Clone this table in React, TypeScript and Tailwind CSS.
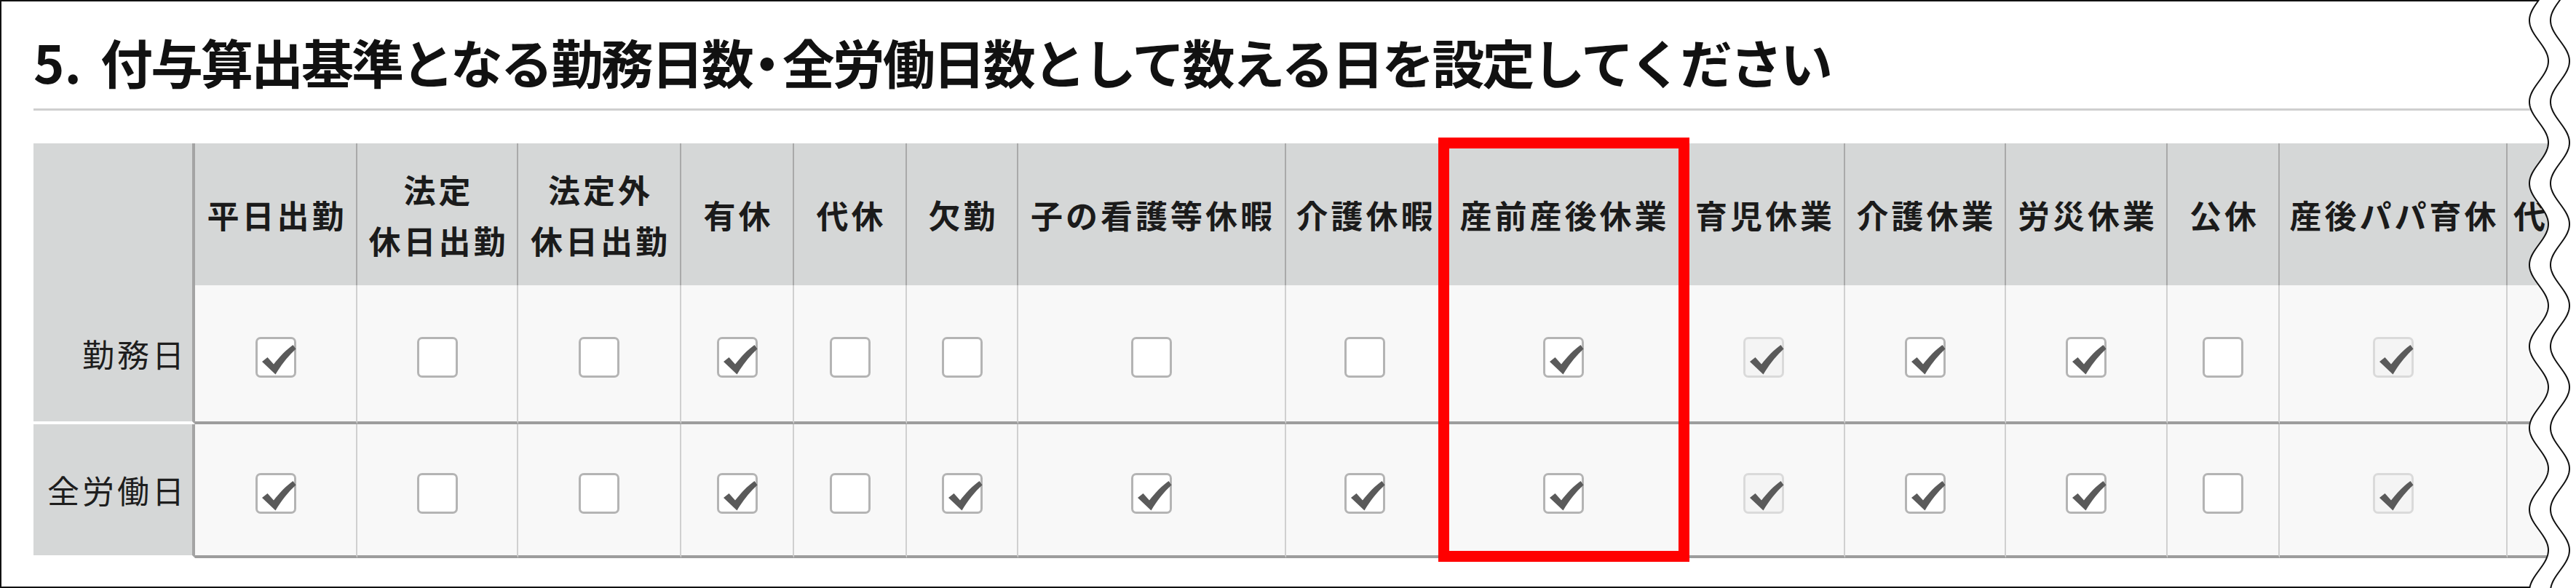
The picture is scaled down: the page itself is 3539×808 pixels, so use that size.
import React from "react";

type S = "on" | "off" | "dis" | "none";

const cols: { h: string[]; r1: S; r2: S }[] = [
  { h: ["平日出勤"], r1: "on", r2: "on" },
  { h: ["法定", "休日出勤"], r1: "off", r2: "off" },
  { h: ["法定外", "休日出勤"], r1: "off", r2: "off" },
  { h: ["有休"], r1: "on", r2: "on" },
  { h: ["代休"], r1: "off", r2: "off" },
  { h: ["欠勤"], r1: "off", r2: "on" },
  { h: ["子の看護等休暇"], r1: "off", r2: "on" },
  { h: ["介護休暇"], r1: "off", r2: "on" },
  { h: ["産前産後休業"], r1: "on", r2: "on" },
  { h: ["育児休業"], r1: "dis", r2: "dis" },
  { h: ["介護休業"], r1: "on", r2: "on" },
  { h: ["労災休業"], r1: "on", r2: "on" },
  { h: ["公休"], r1: "off", r2: "off" },
  { h: ["産後パパ育休"], r1: "dis", r2: "dis" },
  { h: ["代替休暇"], r1: "none", r2: "none" },
];

const font = { fontFamily: '"Noto Sans CJK JP", "Noto Sans", sans-serif' };

function Check() {
  return (
    <svg
      className="absolute left-[-3px] top-[-3px] w-[56px] h-[56px] overflow-visible"
      viewBox="0 0 56 56"
    >
      <path
        d="M9 34 L16.5 28 L25 37.5 C 33 27.5, 41 18.5, 51.5 11 L55.5 16.5 C 45 26, 35.5 38, 27.5 51.5 Z"
        fill="#5a5a5a"
      />
    </svg>
  );
}

function Box({ s }: { s: S }) {
  if (s === "none") return null;
  if (s === "dis") {
    return (
      <div className="relative w-[56px] h-[56px] mt-[10px] rounded-[7px] border-[3px] border-[#dadada] bg-[#f4f4f4]">
        <Check />
      </div>
    );
  }
  return (
    <div className="relative w-[56px] h-[56px] mt-[10px] rounded-[7px] border-[3px] border-[#b4b4b4] bg-white">
      {s === "on" && <Check />}
    </div>
  );
}

function Wave() {
  const H = 808;
  const P = 112;
  const A = 13;
  const mk = (cx: number) => {
    const pts: string[] = [];
    for (let y = -4; y <= H + 4; y += 2) {
      const x = cx + A * Math.sin((2 * Math.PI * y) / P + Math.PI);
      pts.push(`${x.toFixed(2)},${y}`);
    }
    return pts;
  };
  const left = mk(38);
  const right = mk(67);
  const fill = `M${left.join(" L")} L95,${H + 4} L95,-4 Z`;
  return (
    <svg
      className="absolute left-[3450px] top-0 w-[89px] h-[808px]"
      viewBox="0 0 89 808"
    >
      <path d={fill} fill="#ffffff" />
      <path d={`M${left.join(" L")}`} fill="none" stroke="#111" strokeWidth="2" />
      <path d={`M${right.join(" L")}`} fill="none" stroke="#111" strokeWidth="2" />
    </svg>
  );
}

export default function App() {
  return (
    <div className="relative w-[3539px] h-[808px] overflow-hidden bg-white" style={font}>
      <div className="h-[808px] border-l-2 border-t-2 border-b-2 border-[#111] pl-[44px]">
        <div className="mt-[40px] h-[84px] leading-[84px] text-[72px] font-bold tracking-[-3px] text-[#111] whitespace-nowrap">
          <span className="mr-[26px] tracking-[0px]">5.</span>
          付与算出基準となる勤務日数<span className="inline-flex w-[42px] justify-center tracking-[0px]">・</span>全労働日数として数える日を設定してください
        </div>
        <div className="mt-[23px] h-[3px] bg-[#cfcfcf]" />
        <div className="mt-[45px] grid grid-cols-[222px_223px_221px_224px_155px_155px_153px_368px_217px_329px_222px_221px_222px_154px_313px_90px] grid-rows-[195px_191px_184px]">
          {/* header row */}
          <div className="bg-[#d5d7d7] border-r-4 border-[#a4a4a4]" />
          {cols.map((c, i) => (
            <div
              key={"h" + i}
              className={
                i === cols.length - 1
                  ? "bg-[#d5d7d7] flex flex-col justify-center items-start pl-[4px] text-[44px] font-bold leading-[70px] tracking-[4px] text-[#1b1b1b] whitespace-nowrap overflow-hidden"
                  : "bg-[#d5d7d7] border-r-2 border-[#a9a9a9] flex flex-col justify-center items-center text-[44px] font-bold leading-[70px] tracking-[4px] text-[#1b1b1b] whitespace-nowrap"
              }
            >
              {c.h.map((t) => (
                <span key={t} className="block pl-[4px]">
                  {t}
                </span>
              ))}
            </div>
          ))}
          {/* row 1 */}
          <div className="bg-[#d5d7d7] border-r-4 border-[#a4a4a4] border-b-4 border-b-white flex items-center justify-end pr-[7px] text-[44px] tracking-[4px] text-[#1e1e1e]">
            勤務日
          </div>
          {cols.map((c, i) => (
            <div
              key={"a" + i}
              className="bg-[#f8f8f8] border-r-2 border-[#d0d0d0] border-b-4 border-b-[#9d9d9d] flex items-center justify-center"
            >
              <Box s={c.r1} />
            </div>
          ))}
          {/* row 2 */}
          <div className="bg-[#d5d7d7] border-r-4 border-[#a4a4a4] border-b-4 border-b-white flex items-center justify-end pr-[7px] text-[44px] tracking-[4px] text-[#1e1e1e]">
            全労働日
          </div>
          {cols.map((c, i) => (
            <div
              key={"b" + i}
              className="bg-[#f8f8f8] border-r-2 border-[#d0d0d0] border-b-4 border-b-[#9d9d9d] flex items-center justify-center"
            >
              <Box s={c.r2} />
            </div>
          ))}
        </div>
      </div>
      <div className="absolute left-[1976px] top-[189px] w-[345px] h-[583px] border-[15px] border-[#ff0000]" />
      <Wave />
    </div>
  );
}
